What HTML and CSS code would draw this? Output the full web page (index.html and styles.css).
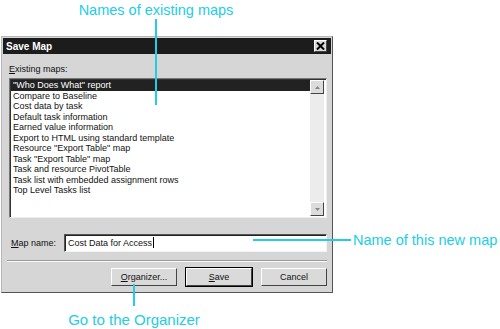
FILE: index.html
```html
<!DOCTYPE html>
<html lang="en">
<head>
    <meta charset="UTF-8">
    <title>Save Map</title>
    <link rel="stylesheet" href="styles.css">
</head>
<body>
    <div class="figure">
        <div class="callout callout-top">
            <span class="callout-text">Names of existing maps</span>
        </div>

        <div class="dialog">
            <div class="titlebar">
                <span class="title">Save Map</span>
                <span class="close-btn">
                    <svg width="9" height="8" viewBox="0 0 9 8"><path d="M1 0.5 L8 7.5 M8 0.5 L1 7.5" stroke="#000" stroke-width="2"/></svg>
                </span>
            </div>
            <div class="dialog-body">
                <div class="label"><u>E</u>xisting maps:</div>
                <div class="listbox">
                    <ul class="items">
                        <li class="selected">"Who Does What" report</li>
                        <li>Compare to Baseline</li>
                        <li>Cost data by task</li>
                        <li>Default task information</li>
                        <li>Earned value information</li>
                        <li>Export to HTML using standard template</li>
                        <li>Resource "Export Table" map</li>
                        <li>Task "Export Table" map</li>
                        <li>Task and resource PivotTable</li>
                        <li>Task list with embedded assignment rows</li>
                        <li>Top Level Tasks list</li>
                    </ul>
                    <div class="scrollbar">
                        <span class="arrow-btn"><svg width="5" height="3" viewBox="0 0 5 3"><path d="M0 3 L2.5 0 L5 3Z" fill="#888"/></svg></span>
                        <span class="track"></span>
                        <span class="arrow-btn"><svg width="5" height="3" viewBox="0 0 5 3"><path d="M0 0 L2.5 3 L5 0Z" fill="#888"/></svg></span>
                    </div>
                </div>
                <div class="name-row">
                    <span class="label"><u>M</u>ap name:</span>
                    <div class="textbox">Cost Data for Access<span class="caret"></span></div>
                </div>
                <div class="separator"></div>
                <div class="buttons">
                    <button class="btn"><u>O</u>rganizer...</button>
                    <button class="btn btn-default"><u>S</u>ave</button>
                    <button class="btn">Cancel</button>
                </div>
            </div>
        </div>

        <div class="callout callout-right">
            <span class="line-h"></span>
            <span class="callout-text">Name of this new map</span>
        </div>
        <div class="callout callout-bottom">
            <span class="callout-text">Go to the Organizer</span>
        </div>
    </div>
</body>
</html>
```

FILE: styles.css
```css
body {
    margin: 0;
    background: #fff;
    font-family: "Liberation Sans", Arial, sans-serif;
}
.figure {
    position: relative;
    width: 500px;
    height: 329px;
    overflow: hidden;
}

/* dialog */
.dialog {
    margin: 36px 0 0 1px;
    width: 330px;
    height: 255px;
    background: #d6d6d6;
    border: 1px solid #b8b8b8;
    border-right-color: #555;
    border-bottom-color: #555;
    font-size: 9px;
    color: #111;
}
.titlebar {
    display: flex;
    align-items: center;
    justify-content: space-between;
    height: 16px;
    margin: 1px;
    padding: 0 4px 0 3px;
    background: #1c1c1c;
}
.title {
    color: #fff;
    font-weight: bold;
    font-size: 10px;
}
.close-btn {
    display: flex;
    align-items: center;
    justify-content: center;
    width: 11px;
    height: 10px;
    background: #d8d8d8;
    border: 1px solid #fff;
    border-right-color: #444;
    border-bottom-color: #444;
}
.dialog-body {
    padding: 8px 5px 0 7px;
}
.label {
    line-height: 12px;
}
.listbox {
    display: flex;
    height: 138px;
    margin-top: 3px;
    background: #fff;
    border: 1px solid #777;
    border-right-color: #eee;
    border-bottom-color: #eee;
    box-shadow: inset 1px 1px 0 #333;
}
.items {
    flex: 1;
    list-style: none;
    margin: 1px 0 0 1px;
    padding: 0;
}
.items li {
    height: 10.5px;
    line-height: 10.5px;
    padding-left: 2px;
}
.items li.selected {
    background: #222;
    color: #fff;
}
.scrollbar {
    display: flex;
    flex-direction: column;
    width: 14px;
    margin: 1px 2px 1px 0;
    background: #ececec;
}
.arrow-btn {
    display: flex;
    align-items: center;
    justify-content: center;
    height: 12px;
    background: #dcdcdc;
    border: 1px solid #fff;
    border-right-color: #444;
    border-bottom-color: #444;
}
.track {
    flex: 1;
}
.name-row {
    display: flex;
    align-items: center;
    gap: 8px;
    margin-top: 16px;
    padding-left: 2px;
}
.textbox {
    flex: 1;
    height: 16px;
    line-height: 16px;
    padding-left: 3px;
    background: #fff;
    border: 1px solid #555;
    border-right-color: #f4f4f4;
    border-bottom-color: #f4f4f4;
    box-shadow: inset 1px 1px 0 #222;
}
.caret {
    display: inline-block;
    width: 1px;
    height: 11px;
    margin-left: 1px;
    vertical-align: -2px;
    background: #000;
}
.separator {
    height: 0;
    margin: 8px 0 0 -2px;
    border-top: 1px solid #999;
    border-bottom: 1px solid #fafafa;
}
.buttons {
    display: flex;
    justify-content: flex-end;
    gap: 9px;
    margin-top: 6px;
}
.btn {
    width: 66px;
    height: 18px;
    padding: 0;
    font-family: inherit;
    font-size: 9px;
    color: #111;
    background: #dadada;
    border: 1px solid #fff;
    border-right-color: #444;
    border-bottom-color: #444;
}
.btn-default {
    outline: 1px solid #000;
}

/* annotations */
.callout {
    position: absolute;
    color: #22cde6;
    font-size: 14.5px;
}
.callout-top {
    left: 76px;
    top: 2px;
    width: 160px;
    text-align: center;
}
.callout-top::after {
    content: "";
    display: block;
    width: 2px;
    height: 86px;
    margin: 1px auto 0;
    background: #22cde6;
}
.callout-right {
    left: 253px;
    top: 232px;
    display: flex;
    align-items: center;
    gap: 2px;
}
.line-h {
    width: 98px;
    height: 2px;
    background: #22cde6;
}
.callout-bottom {
    left: 62px;
    top: 284px;
    width: 144px;
    font-size: 15px;
    text-align: center;
}
.callout-bottom::before {
    content: "";
    display: block;
    width: 2px;
    height: 22px;
    margin: 0 auto 5px;
    background: #22cde6;
}
```
